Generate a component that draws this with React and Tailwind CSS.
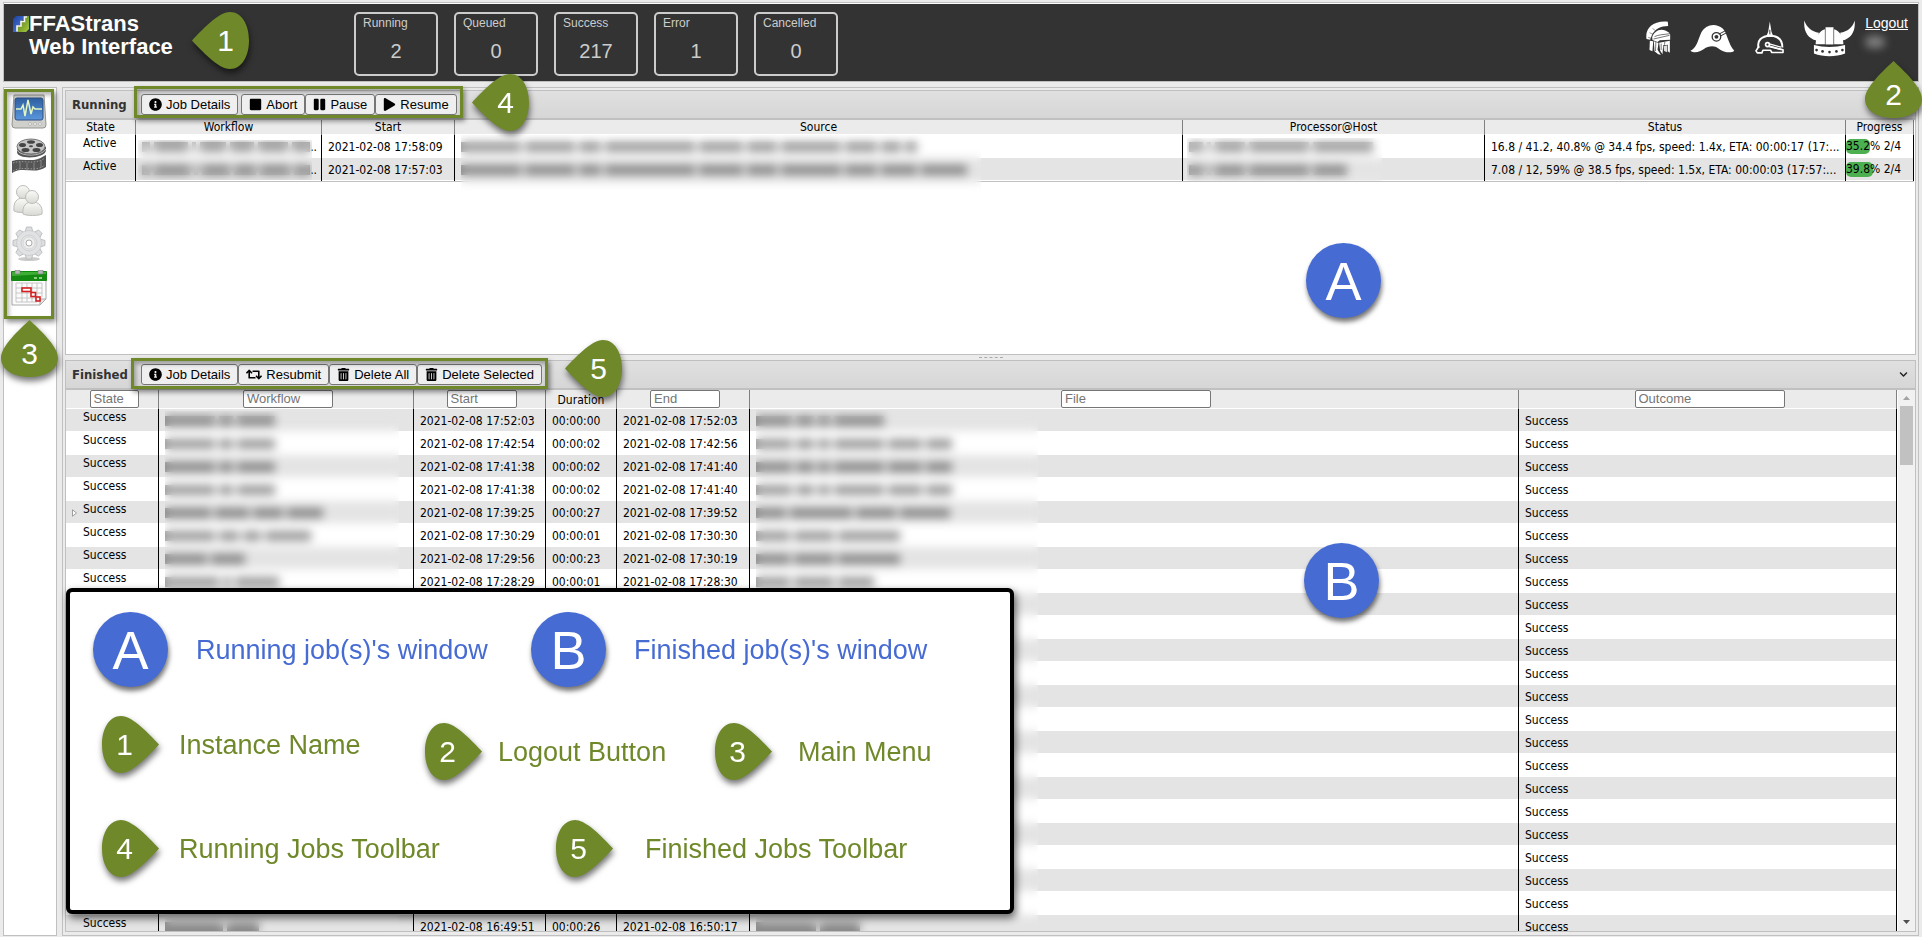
import { FaInfoCircle, FaStop, FaPause, FaPlay, FaRetweet, FaTrashAlt, FaChevronDown } from "react-icons/fa";

const stats = [
  { label: "Running", value: 2 },
  { label: "Queued", value: 0 },
  { label: "Success", value: 217 },
  { label: "Error", value: 1 },
  { label: "Cancelled", value: 0 },
];

const runningJobs = [
  {
    start: "2021-02-08 17:58:09",
    workflow: [8, 34, 4, 26, 24, 30, 40],
    source: [60, 50, 22, 90, 44, 30, 60, 32, 20, 12],
    host: [14, 4, 30, 60, 60],
    status: "16.8 / 41.2, 40.8% @ 34.4 fps, speed: 1.4x, ETA: 00:00:17 (17:...",
    progress: 35.2,
  },
  {
    start: "2021-02-08 17:57:03",
    workflow: [8, 36, 4, 28, 22, 30, 40],
    source: [60, 50, 22, 90, 44, 30, 60, 32, 36, 46],
    host: [14, 4, 30, 60, 34],
    status: "7.08 / 12, 59% @ 38.5 fps, speed: 1.5x, ETA: 00:00:03 (17:57:...",
    progress: 39.8,
  },
];

const finishedJobs = [
  { start: "2021-02-08 17:52:03", duration: "00:00:00", end: "2021-02-08 17:52:03", workflow: [50, 14, 38], file: [36, 18, 12, 50] },
  { start: "2021-02-08 17:42:54", duration: "00:00:02", end: "2021-02-08 17:42:56", workflow: [50, 14, 38], file: [36, 18, 12, 50, 34, 26] },
  { start: "2021-02-08 17:41:38", duration: "00:00:02", end: "2021-02-08 17:41:40", workflow: [50, 14, 38], file: [36, 18, 12, 50, 34, 26] },
  { start: "2021-02-08 17:41:38", duration: "00:00:02", end: "2021-02-08 17:41:40", workflow: [50, 14, 38], file: [36, 18, 12, 50, 34, 26] },
  { start: "2021-02-08 17:39:25", duration: "00:00:27", end: "2021-02-08 17:39:52", workflow: [46, 34, 30, 36], file: [30, 62, 40, 50], parent: true },
  { start: "2021-02-08 17:30:29", duration: "00:00:01", end: "2021-02-08 17:30:30", workflow: [50, 20, 18, 46], file: [34, 40, 62] },
  { start: "2021-02-08 17:29:56", duration: "00:00:23", end: "2021-02-08 17:30:19", workflow: [42, 34], file: [34, 40, 62] },
  { start: "2021-02-08 17:28:29", duration: "00:00:01", end: "2021-02-08 17:28:30", workflow: [54, 8, 44], file: [34, 40, 36] },
  ...Array.from({ length: 14 }, () => ({ workflow: [], file: [] })),
  { start: "2021-02-08 16:49:51", duration: "00:00:26", end: "2021-02-08 16:50:17", workflow: [58, 32], file: [60, 40] },
];

function HiddenText({ parts }) {
  return (
    <span aria-hidden="true" className="flex h-[22px] items-center gap-1 overflow-hidden pl-1.5">
      {parts.map((w, i) => (
        <span key={i} className="h-2.5 shrink-0 bg-black/40" style={{ width: w }} />
      ))}
    </span>
  );
}

function ToolButton({ icon: Icon, iconClass = "size-[13px]", children }) {
  return (
    <button
      type="button"
      className="flex h-[21px] items-center gap-1 rounded-[3px] border border-[#767676] bg-[#efefef] px-[7px] text-[13px] text-black whitespace-nowrap"
    >
      <Icon className={iconClass} />
      {children}
    </button>
  );
}

function TitleBar({ title, children }) {
  return (
    <div className="flex h-[29px] shrink-0 items-center border-b-2 border-[#c0c0c0] bg-linear-to-b from-[#e0e0e0] to-[#d6d6d6] pl-1.5">
      <h2 className="w-[69px] font-['DejaVu_Sans_Condensed','Noto_Sans',sans-serif] text-[13px] font-bold text-[#333]">{title}</h2>
      {children}
    </div>
  );
}

function Th({ children }) {
  return (
    <th className="relative border-r border-[#808080] bg-[#ebebeb] p-0 text-center font-normal shadow-[inset_0_-1px_0_white]">
      {children}
    </th>
  );
}

function Td({ children, className = "pl-1.5" }) {
  return (
    <td className={`h-[23px] border-r border-black py-0 pr-0 leading-[22px] whitespace-nowrap overflow-hidden shadow-[inset_0_-1px_0_white] ${className}`}>
      {children}
    </td>
  );
}

function Filter({ label, className }) {
  return (
    <div className="flex justify-center pb-px pl-1">
      <input
        type="text"
        aria-label={label}
        placeholder={label}
        className={`h-[18px] rounded-[2px] border border-[#767676] bg-white px-[3px] font-['Liberation_Sans',Arial,sans-serif] text-[13px] placeholder-[#757575] ${className}`}
      />
    </div>
  );
}

function Logo() {
  return (
    <svg viewBox="0 0 16 16" className="size-4">
      <defs>
        <linearGradient id="logoBlue" x1="0" y1="0" x2="1" y2="1">
          <stop offset="0" stopColor="#1c3f9c" />
          <stop offset="1" stopColor="#5b8be8" />
        </linearGradient>
        <linearGradient id="logoGreen" x1="0" y1="0" x2="1" y2="1">
          <stop offset="0" stopColor="#4e7318" />
          <stop offset="1" stopColor="#a8cc3f" />
        </linearGradient>
      </defs>
      <path d="M3 0H13V4H9V9H5V16H0V3Z" fill="url(#logoBlue)" />
      <path d="M13 0H16V13L13 16H4V10H8V5H12Z" fill="url(#logoGreen)" />
      <path d="M14 1H11.500V5.500H8V10H4V15.500" fill="none" stroke="#f4f4f4" strokeWidth="1.600" />
    </svg>
  );
}

function SpartanHelmet() {
  return (
    <svg viewBox="26 35 74 102" className="h-[34px] w-[25px]">
      <path d="M27 89C22 58 45 33 91 37L92 50C70 50 52 59 43 78L38 91Z" fill="#fff" />
      <path d="M32 84L41 87M36 70L47 75M45 57L54 64" stroke="#333" strokeWidth="1.500" />
      <path d="M44 84C50 63 73 52 95 70L98 76V91L67 93L60 98L45 92Z" fill="#fff" />
      <path d="M48 89L96 78M51 82C62 76 77 76 97 73" stroke="#333" strokeWidth="2" fill="none" />
      <path d="M37 94L47 96L45 126L36 122Z" fill="#fff" />
      <path d="M49 96L63 101L60 121L70 136L62 135L51 126Z" fill="#fff" />
      <path d="M65 100L97 94V130L91 126V106L77 108L75 135L68 124Z" fill="#fff" />
      <path d="M55 98L54 125M82 98L81 106M71 103V122" stroke="#333" strokeWidth="2" />
      <path d="M78 111L89 108V129L80 125Z" fill="#ddd" />
    </svg>
  );
}

function BicorneHat() {
  return (
    <svg viewBox="154 42 136 88" className="h-[29px] w-[45px]">
      <path d="M155 123C174 116 178 90 188 68C199 45 231 36 253 56C267 69 269 103 288 123C279 132 256 128 240 116C228 106 209 108 196 118C183 128 166 131 155 123Z" fill="#fff" />
      <circle cx="234" cy="81" r="13" fill="none" stroke="#333" strokeWidth="4" />
      <circle cx="234" cy="81" r="6" fill="#333" />
      <path d="M241 73L262 62M245 79L268 67" stroke="#333" strokeWidth="3" />
    </svg>
  );
}

function SpikedHelmet() {
  return (
    <svg viewBox="352 35 94 102" className="h-[34px] w-[31px]">
      <path d="M400 36L405 67L409 77H391L395 67Z" fill="#fff" />
      <path d="M400 61V75" stroke="#333" strokeWidth="3" />
      <path d="M366 116C360 93 376 80 400 79C424 79 438 91 438 115" fill="none" stroke="#fff" strokeWidth="6" />
      <path d="M367 111L358 125L362 131H376L379 123H402L406 130H440V122L401 111" fill="none" stroke="#fff" strokeWidth="5" strokeLinejoin="round" />
      <circle cx="393" cy="106" r="6" fill="none" stroke="#fff" strokeWidth="5" />
      <path d="M396 103L434 114M397 112L434 121" stroke="#fff" strokeWidth="4" />
    </svg>
  );
}

function VikingHelmet() {
  return (
    <svg viewBox="503 31 154 110" className="h-[37px] w-[51px]">
      <path d="M504 32C511 53 526 65 548 69L541 92C514 86 501 63 504 32Z" fill="#fff" />
      <path d="M656 32C650 53 635 65 612 69L619 92C646 86 659 63 656 32Z" fill="#fff" />
      <path d="M538 103C539 78 549 64 566 58V103Z" fill="#fff" />
      <path d="M622 103C621 78 611 64 594 58V103Z" fill="#fff" />
      <path d="M568 52H592V104H568Z" fill="#fff" />
      <path d="M533 106C562 114 598 114 627 106V131C598 142 562 142 533 131Z" fill="#fff" />
      <g fill="#333">
        <circle cx="541" cy="121" r="4" />
        <circle cx="559" cy="125" r="4" />
        <circle cx="580" cy="127" r="4" />
        <circle cx="601" cy="125" r="4" />
        <circle cx="619" cy="121" r="4" />
      </g>
    </svg>
  );
}

function MonitorIcon() {
  return (
    <svg viewBox="0 0 36 36" className="size-9">
      <defs>
        <linearGradient id="screen" x1="0" y1="0" x2="0" y2="1">
          <stop offset="0" stopColor="#2f5f9f" />
          <stop offset="1" stopColor="#5a96dd" />
        </linearGradient>
      </defs>
      <path d="M3 1H33L35 31Q35 34 32 34H4Q1 34 1 31Z" fill="#cfcfcb" stroke="#94948f" />
      <rect x="4" y="4" width="28" height="22" rx="2" fill="url(#screen)" stroke="#2d4f82" />
      <path d="M5 15H10L12 11L14 22L17 6L20 20L22 13L24 15H31" fill="none" stroke="#e3f5c0" strokeWidth="1.500" />
      <g fill="#eee" stroke="#999" strokeWidth=".5">
        <circle cx="19" cy="30" r="1.500" />
        <circle cx="24" cy="30" r="1.500" />
        <circle cx="29" cy="30" r="1.500" />
      </g>
    </svg>
  );
}

function FilmIcon() {
  return (
    <svg viewBox="0 0 36 36" className="size-9">
      <path d="M1 23C12 19 22 26 33 18L35 17V29C24 37 12 28 1 35Z" fill="#555" />
      <path d="M2 25C12 21 22 28 34 20M2 33C13 27 24 35 34 27" fill="none" stroke="#999" strokeDasharray="1.500 1.500" />
      <path d="M9 24V31M16 25V32M23 25V32M30 22V30" stroke="#888" />
      <path d="M6 9V14C6 22 35 21 35 12V9Z" fill="#555" />
      <path d="M6 12C9 19 31 19 35 11" fill="none" stroke="#bbb" />
      <ellipse cx="20" cy="8.500" rx="14" ry="7.500" fill="#c4c4c4" stroke="#777" />
      <g fill="#444">
        <ellipse cx="20" cy="4" rx="4" ry="1.800" />
        <ellipse cx="11.500" cy="7" rx="3.500" ry="2" />
        <ellipse cx="28.500" cy="7" rx="3.500" ry="2" />
        <ellipse cx="14.500" cy="12" rx="4" ry="2" />
        <ellipse cx="25.500" cy="12" rx="4" ry="2" />
        <ellipse cx="20" cy="8.300" rx="2" ry="1" />
      </g>
    </svg>
  );
}

function UsersIcon() {
  return (
    <svg viewBox="0 0 36 36" className="size-9">
      <defs>
        <linearGradient id="body" x1="0" y1="0" x2="0" y2="1">
          <stop offset="0" stopColor="#fafaf8" />
          <stop offset="1" stopColor="#d8d8d4" />
        </linearGradient>
      </defs>
      <g fill="url(#body)" stroke="#bdbdb9">
        <path d="M3 29C2 20 6 16 12 16C18 16 20 20 20 29C16 31 7 31 3 29Z" />
        <circle cx="12" cy="10" r="6.500" />
        <path d="M12 32C11 24 15 20 21 20C28 20 32 24 31 32C27 34 16 34 12 32Z" />
        <circle cx="21" cy="15" r="6.500" />
      </g>
    </svg>
  );
}

function GearIcon() {
  return (
    <svg viewBox="0 0 36 36" className="size-9">
      <ellipse cx="18" cy="33" rx="11" ry="2" fill="#ccc" />
      <g fill="#dcdee0" stroke="#b4b6b8" strokeWidth=".8">
        {[0, 45, 90, 135, 180, 225, 270, 315].map((a) => (
          <path key={a} d="M14 6L15.500 1H20.500L22 6Z" transform={`rotate(${a} 18 17)`} />
        ))}
      </g>
      <circle cx="18" cy="17" r="12.500" fill="#e0e2e3" stroke="#c0c2c4" strokeWidth=".6" />
      <circle cx="18" cy="17" r="8" fill="none" stroke="#d0d2d4" />
      <circle cx="18" cy="17" r="6" fill="#eceded" stroke="#ccc" strokeWidth=".6" />
      <circle cx="18" cy="17" r="3" fill="#fff" stroke="#999" strokeWidth=".8" />
    </svg>
  );
}

function CalendarIcon() {
  return (
    <svg viewBox="0 0 36 36" className="size-9">
      <path d="M1 8H35V29L29 35H1Z" fill="#fbfbfb" stroke="#aaa" />
      <path d="M5 13H31M5 18H31M5 23H31M5 28H28M5 32H26M5 13V32M11 13V32M16 13V32M21 13V32M26 13V32M31 13V27" stroke="#bbb" strokeWidth=".8" />
      <path d="M35 29H29V35Z" fill="#e5e5e5" stroke="#aaa" />
      <rect x="0" y="1" width="36" height="10" rx="1" fill="#158a12" />
      <path d="M1 2H35V4L1 6Z" fill="#3fae35" />
      <path d="M23 8H26M28 8H31" stroke="#8fd07f" strokeWidth="2" />
      <path d="M4 0H9V4H4ZM27 0H32V4H27Z" fill="#b5b5b5" stroke="#777" strokeWidth=".5" />
      <g fill="#fff" stroke="#d42020" strokeWidth="1.600">
        <rect x="11" y="18" width="9" height="3.500" />
        <rect x="20" y="22.500" width="4.500" height="4" />
        <rect x="25" y="27" width="4" height="4" />
      </g>
    </svg>
  );
}

const menu = [
  { name: "Monitor", Icon: MonitorIcon },
  { name: "Submit", Icon: FilmIcon },
  { name: "Users", Icon: UsersIcon },
  { name: "Settings", Icon: GearIcon },
  { name: "Scheduler", Icon: CalendarIcon },
];

const rotations = { left: 0, up: 90, right: 180 };
const digitShift = { left: "pl-2.5", right: "pr-3", up: "pt-2.5" };

function Pin({ n, dir = "right", className = "" }) {
  return (
    <span className={`flex size-[57px] shrink-0 items-center justify-center ${className || "relative"}`}>
      <svg viewBox="0 0 57 57" className="absolute inset-0 size-[57px] overflow-visible drop-shadow-[1px_4px_3px_rgba(0,0,0,0.55)]">
        <path
          d="M0 28.500C9 19 26 0 38 0C50 0 57 13 57 28.500C57 44 50 57 38 57C26 57 9 38 0 28.500Z"
          fill="#6f8829"
          transform={`rotate(${rotations[dir]} 28.500 28.500)`}
        />
      </svg>
      <span className={`relative text-[30px] leading-none text-white ${digitShift[dir]}`}>{n}</span>
    </span>
  );
}

function Disc({ letter, className = "" }) {
  return (
    <span
      className={`flex size-[75px] shrink-0 items-center justify-center rounded-full bg-[#466bd3] text-[54px] leading-none text-white shadow-[1px_4px_5px_rgba(0,0,0,0.55)] ${className}`}
    >
      {letter}
    </span>
  );
}

function Legend() {
  return (
    <section className="absolute top-[588px] left-[66px] h-[326px] w-[948px] rounded-md border-4 border-black bg-white text-[27px] leading-8 whitespace-nowrap text-[#6f8829] shadow-[2px_4px_8px_rgba(0,0,0,0.6)]">
      <div className="flex items-center pt-5 pl-[23px] text-[#466bd3]">
        <Disc letter="A" />
        <span className="ml-7 w-[335px]">Running job(s)'s window</span>
        <Disc letter="B" />
        <span className="ml-7">Finished job(s)'s window</span>
      </div>
      <div className="flex items-start pt-[29px] pl-8">
        <div className="flex w-[323px] items-center gap-5">
          <Pin n={1} />
          <span>Instance Name</span>
        </div>
        <div className="flex w-[290px] items-center gap-4 pt-[7px]">
          <Pin n={2} />
          <span>Logout Button</span>
        </div>
        <div className="flex items-center gap-[26px] pt-[7px]">
          <Pin n={3} />
          <span>Main Menu</span>
        </div>
      </div>
      <div className="flex items-start pt-10 pl-8">
        <div className="flex w-[454px] items-center gap-5">
          <Pin n={4} />
          <span>Running Jobs Toolbar</span>
        </div>
        <div className="flex items-center gap-8">
          <Pin n={5} />
          <span>Finished Jobs Toolbar</span>
        </div>
      </div>
    </section>
  );
}

function Outline({ className }) {
  return <div className={`pointer-events-none absolute border-[3px] border-[#6f8829] shadow-[2px_3px_5px_rgba(0,0,0,0.45),inset_2px_3px_4px_rgba(0,0,0,0.3)] ${className}`} />;
}

function Header() {
  return (
    <header className="border border-[#c0c0c0] bg-white pt-px">
      <div className="flex h-[77px] bg-[#333]">
        <div className="flex w-[350px] pt-3 pl-[9px]">
          <Logo />
          <h1 className="-mt-1 text-[22px] leading-[23px] font-bold text-white">
            FFAStrans
            <br />
            Web Interface
          </h1>
        </div>
        <div className="flex gap-4 pt-2">
          {stats.map((s) => (
            <div key={s.label} className="h-16 w-[84px] rounded-[5px] border-2 border-[#ccc] text-[#ccc]">
              <p className="pt-px pl-[7px] text-xs leading-4">{s.label}</p>
              <p className="pt-1.5 text-center text-xl leading-7">{s.value}</p>
            </div>
          ))}
        </div>
        <div className="ml-auto flex pt-3.5 pr-2.5">
          <div className="flex h-10 items-center gap-[19px]">
            <SpartanHelmet />
            <BicorneHat />
            <SpikedHelmet />
            <VikingHelmet />
          </div>
          <div className="-mt-1 ml-2.5">
            <a href="#logout" className="block text-sm leading-[18px] text-white underline">Logout</a>
            <div className="mt-1 h-3 w-5 rounded-full bg-[#808080] blur-[4px]" />
          </div>
        </div>
      </div>
    </header>
  );
}

function RunningPanel() {
  return (
    <section className="flex min-h-0 flex-[263_1_0px] flex-col overflow-hidden border border-[#c0c0c0] bg-white">
      <TitleBar title="Running">
        <div className="flex">
          <div className="mr-[3px]">
            <ToolButton icon={FaInfoCircle}>Job Details</ToolButton>
          </div>
          <ToolButton icon={FaStop}>Abort</ToolButton>
          <ToolButton icon={FaPause}>Pause</ToolButton>
          <ToolButton icon={FaPlay}>Resume</ToolButton>
        </div>
      </TitleBar>
      <div className="mr-px border-b border-[#c0c0c0]">
        <table className="w-full table-fixed border-separate border-spacing-0 font-['DejaVu_Sans_Condensed','Noto_Sans',sans-serif] text-xs">
          <colgroup>
            <col className="w-[70px]" />
            <col className="w-[186px]" />
            <col className="w-[133px]" />
            <col />
            <col className="w-[302px]" />
            <col className="w-[361px]" />
            <col className="w-[68px]" />
          </colgroup>
          <thead>
            <tr className="h-[15px] leading-[15px]">
              <Th>State</Th>
              <Th>
                Workflow
                <span className="absolute top-5 left-0.5 h-10 w-[174px] backdrop-blur-[5px]" />
              </Th>
              <Th>Start</Th>
              <Th>
                Source
                <span className="absolute top-[15px] left-1.5 h-[58px] w-[520px] backdrop-blur-[5px]" />
              </Th>
              <Th>
                Processor@Host
                <span className="absolute top-[18px] left-1 h-[43px] w-[195px] backdrop-blur-[5px]" />
              </Th>
              <Th>Status</Th>
              <Th>Progress</Th>
            </tr>
          </thead>
          <tbody>
            {runningJobs.map((job) => (
              <tr key={job.start} className="even:bg-[#e4e4e4]">
                <td className="h-[23px] border-r border-black p-0 pl-[17px] align-top leading-[17px] shadow-[inset_0_-1px_0_white]">Active</td>
                <Td className="pl-0">
                  <span className="flex justify-between pr-1">
                    <HiddenText parts={job.workflow} />
                    <span>..</span>
                  </span>
                </Td>
                <Td>{job.start}</Td>
                <Td className="pl-0">
                  <HiddenText parts={job.source} />
                </Td>
                <Td className="pl-0">
                  <HiddenText parts={job.host} />
                </Td>
                <Td>{job.status}</Td>
                <Td className="pl-0">
                  <span className="block h-[15px] rounded-[5px] bg-[#4caf50] leading-[15px]" style={{ width: `${job.progress}%` }}>
                    {job.progress}% 2/4
                  </span>
                </Td>
              </tr>
            ))}
          </tbody>
        </table>
      </div>
    </section>
  );
}

function FinishedPanel() {
  return (
    <section className="flex min-h-0 flex-[570_1_0px] flex-col overflow-hidden border border-[#c0c0c0] bg-white">
      <TitleBar title="Finished">
        <div className="flex">
          <ToolButton icon={FaInfoCircle}>Job Details</ToolButton>
          <ToolButton icon={FaRetweet} iconClass="h-[13px] w-4">Resubmit</ToolButton>
          <ToolButton icon={FaTrashAlt}>Delete All</ToolButton>
          <ToolButton icon={FaTrashAlt}>Delete Selected</ToolButton>
        </div>
        <button type="button" aria-label="Collapse" className="mr-[7px] ml-auto">
          <FaChevronDown className="size-[9px] text-[#222]" />
        </button>
      </TitleBar>
      <div className="flex min-h-0 flex-1 overflow-hidden">
        <div className="min-w-0 flex-1 overflow-hidden">
          <table className="w-full table-fixed border-separate border-spacing-0 font-['DejaVu_Sans_Condensed','Noto_Sans',sans-serif] text-xs">
            <colgroup>
              <col className="w-[93px]" />
              <col className="w-[255px]" />
              <col className="w-[132px]" />
              <col className="w-[71px]" />
              <col className="w-[133px]" />
              <col />
              <col className="w-[378px]" />
            </colgroup>
            <thead>
              <tr className="h-[19px] leading-[18px]">
                <Th>
                  <Filter label="State" className="w-[49px]" />
                </Th>
                <Th>
                  <Filter label="Workflow" className="w-[90px]" />
                  <span className="absolute top-[21px] left-1.5 h-[540px] w-[234px] backdrop-blur-[5px]" />
                </Th>
                <Th>
                  <Filter label="Start" className="w-[70px]" />
                </Th>
                <Th>Duration</Th>
                <Th>
                  <Filter label="End" className="w-[70px]" />
                </Th>
                <Th>
                  <Filter label="File" className="w-[150px]" />
                  <span className="absolute top-5 left-1.5 h-[540px] w-[282px] backdrop-blur-[5px]" />
                </Th>
                <Th>
                  <Filter label="Outcome" className="w-[150px]" />
                </Th>
              </tr>
            </thead>
            <tbody>
              {finishedJobs.map((job, i) => (
                <tr key={i} className="odd:bg-[#e4e4e4]">
                  <td className="h-[23px] border-r border-black p-0 align-top leading-[17px] shadow-[inset_0_-1px_0_white]">
                    <span className="flex h-[17px]">
                      <span className="flex w-[17px] items-end pb-px pl-1.5">
                        {job.parent && (
                          <svg viewBox="0 0 5 8" className="h-2 w-[5px]">
                            <path d="M.5 .8L4.500 4L.5 7.200Z" fill="#fff" stroke="#888" strokeWidth=".8" />
                          </svg>
                        )}
                      </span>
                      Success
                    </span>
                  </td>
                  <Td className="pl-0">
                    <HiddenText parts={job.workflow} />
                  </Td>
                  <Td>{job.start}</Td>
                  <Td>{job.duration}</Td>
                  <Td>{job.end}</Td>
                  <Td className="pl-0">
                    <HiddenText parts={job.file} />
                  </Td>
                  <Td>Success</Td>
                </tr>
              ))}
            </tbody>
          </table>
        </div>
        <div className="ml-px flex w-[17px] flex-col items-center bg-[#f1f1f1]">
          <svg viewBox="0 0 17 16" className="h-4 w-[17px] shrink-0">
            <path d="M5 10H12L8.500 6Z" fill="#a3a3a3" />
          </svg>
          <div className="h-[59px] w-[13px] bg-[#c1c1c1]" />
          <svg viewBox="0 0 17 16" className="mt-auto h-4 w-[17px] shrink-0">
            <path d="M5 5H12L8.500 9Z" fill="#505050" />
          </svg>
        </div>
      </div>
    </section>
  );
}

export default function App() {
  return (
    <div className="relative flex h-screen flex-col overflow-hidden bg-[#ebebeb] px-[3px] pt-0.5 pb-px font-['Liberation_Sans',Arial,sans-serif] text-black">
      <Header />
      <div className="mt-[5px] flex min-h-0 flex-1 gap-[5px]">
        <nav className="w-[54px] border border-[#c0c0c0] bg-white">
          <ul className="flex flex-col items-center gap-2 pt-1.5 pr-0.5">
            {menu.map(({ name, Icon }) => (
              <li key={name}>
                <button type="button" aria-label={name} className="block">
                  <Icon />
                </button>
              </li>
            ))}
          </ul>
        </nav>
        <main className="flex min-w-0 flex-1 flex-col border border-[#c0c0c0] px-0.5 pt-0.5 pb-[3px]">
          <RunningPanel />
          <div className="flex h-[5px] shrink-0 items-center justify-center">
            <span className="w-6 border-t border-dashed border-[#aaa]" />
          </div>
          <FinishedPanel />
        </main>
      </div>

      <Outline className="top-[89px] left-1 h-[230px] w-[50px]" />
      <Outline className="top-[86px] left-[134px] h-8 w-[329px]" />
      <Outline className="top-[358px] left-[131px] h-[31px] w-[417px]" />
      <Pin n={1} dir="left" className="absolute top-3 left-48" />
      <Pin n={4} dir="left" className="absolute top-[74px] left-[472px]" />
      <Pin n={5} dir="left" className="absolute top-[340px] left-[565px]" />
      <Pin n={3} dir="up" className="absolute top-80 left-px" />
      <Pin n={2} dir="up" className="absolute top-[61px] right-0" />
      <Disc letter="A" className="absolute top-[243px] left-[1306px]" />
      <Disc letter="B" className="absolute top-[543px] left-[1304px]" />
      <Legend />
    </div>
  );
}
